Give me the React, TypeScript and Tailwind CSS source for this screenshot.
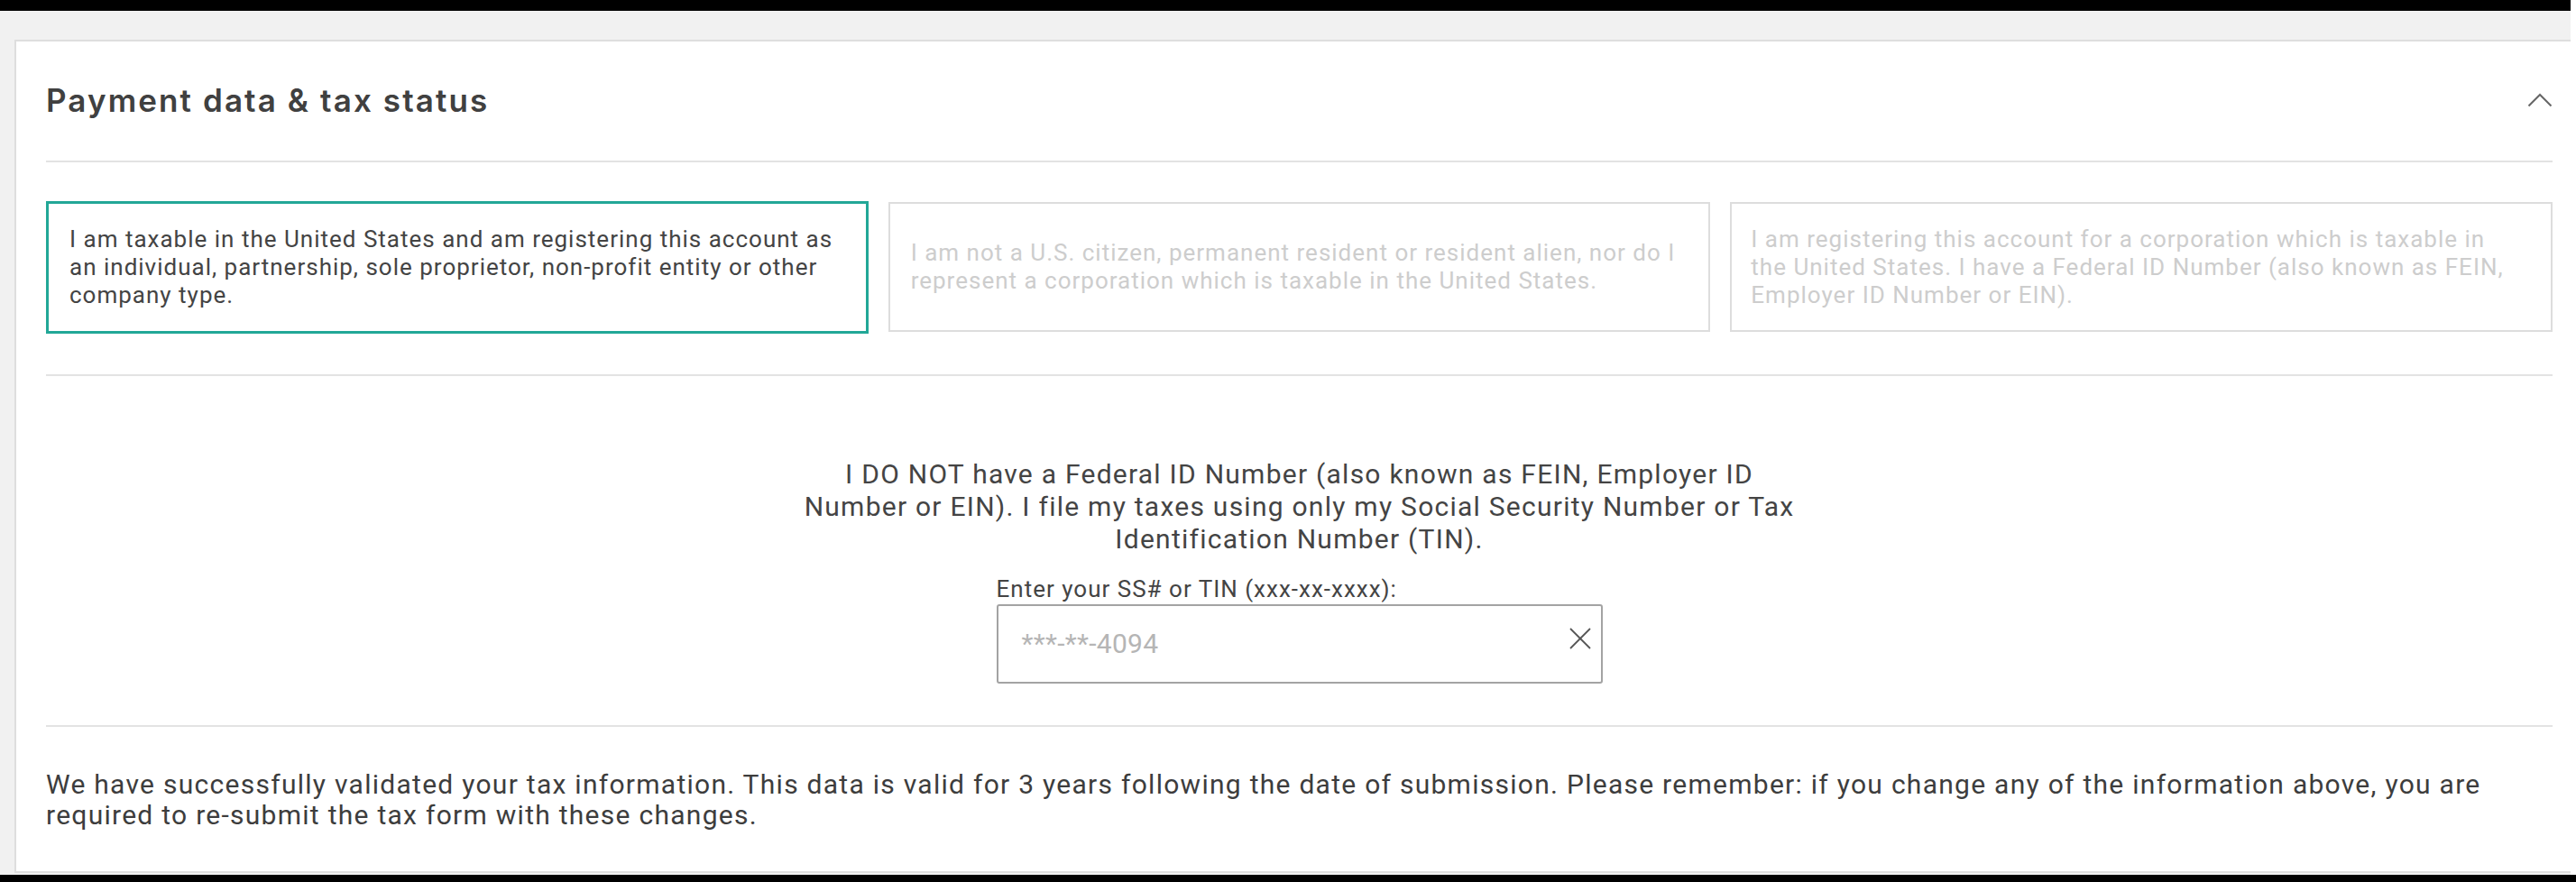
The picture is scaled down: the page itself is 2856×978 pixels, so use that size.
import React from "react";

const roboto = { fontFamily: "Roboto, 'Liberation Sans', sans-serif" };

function ChevronUp() {
  return (
    <svg width="28" height="16" viewBox="0 0 28 16" fill="none">
      <polyline points="1.5,14.5 14,2 26.5,14.5" stroke="#666" strokeWidth="2" />
    </svg>
  );
}

function CloseX() {
  return (
    <svg width="24" height="24" viewBox="0 0 24 24" fill="none">
      <line x1="1" y1="1" x2="23" y2="23" stroke="#555" strokeWidth="1.8" />
      <line x1="23" y1="1" x2="1" y2="23" stroke="#555" strokeWidth="1.8" />
    </svg>
  );
}

export default function App() {
  return (
    <div className="w-[2856px] h-[978px] bg-white flex flex-col" style={roboto}>
      <div className="h-[12px] w-[2850px] bg-black shrink-0" />
      <div className="w-[2850px] bg-[#f1f1f1] pt-[32px] pl-[16px] h-[958px] shrink-0">
        <div className="h-[924px] bg-white border-2 border-r-0 border-[#dedede] pl-[33px] pr-[20px] flex flex-col">
          {/* Header */}
          <div className="flex items-center justify-between pt-[45px] pb-[47px] border-b-2 border-[#e3e3e3]">
            <h2
              className="text-[35px] leading-[40px] font-semibold text-[#404040] tracking-[2.1px]"
              style={{ fontFamily: "Inter, 'Open Sans', sans-serif" }}
            >
              Payment data &amp; tax status
            </h2>
            <ChevronUp />
          </div>

          {/* Options */}
          <div className="pt-[43px] pb-[45px] border-b-2 border-[#e3e3e3]">
            <div className="grid grid-cols-3 gap-[22px] items-start">
              <div className="h-[147px] border-[3px] border-[#22a797] px-[23px] flex items-center text-[26px] leading-[31px] tracking-[1px] text-[#444] whitespace-nowrap">
                <p>
                  I am taxable in the United States and am registering this account as
                  <br />
                  an individual, partnership, sole proprietor, non-profit entity or other
                  <br />
                  company type.
                </p>
              </div>
              <div className="h-[144px] mt-[1px] border-2 border-[#dddddd] px-[23px] flex items-center text-[26px] leading-[31px] tracking-[1px] text-[#cdcdcd] whitespace-nowrap">
                <p>
                  I am not a U.S. citizen, permanent resident or resident alien, nor do I
                  <br />
                  represent a corporation which is taxable in the United States.
                </p>
              </div>
              <div className="h-[144px] mt-[1px] border-2 border-[#dddddd] px-[21px] flex items-center text-[26px] leading-[31px] tracking-[1px] text-[#cdcdcd] whitespace-nowrap">
                <p>
                  I am registering this account for a corporation which is taxable in
                  <br />
                  the United States. I have a Federal ID Number (also known as FEIN,
                  <br />
                  Employer ID Number or EIN).
                </p>
              </div>
            </div>
          </div>

          {/* Middle */}
          <div className="pt-[91px] pb-[46px] border-b-2 border-[#e3e3e3] flex flex-col items-center">
            <p className="text-[30px] leading-[36px] tracking-[1.25px] text-[#444] text-center whitespace-nowrap">
              I DO NOT have a Federal ID Number (also known as FEIN, Employer ID
              <br />
              Number or EIN). I file my taxes using only my Social Security Number or Tax
              <br />
              Identification Number (TIN).
            </p>
            <div className="w-[672px] mt-[22px] flex flex-col">
              <label className="text-[26px] leading-[30px] tracking-[1px] text-[#444] whitespace-nowrap">
                Enter your SS# or TIN (xxx-xx-xxxx):
              </label>
              <div className="mt-[2px] h-[88px] border-2 border-[#a3a3a3] rounded-[3px] pl-[26px] pr-[11px] flex items-center justify-between">
                <span className="text-[30px] leading-[36px] tracking-[0.3px] text-[#b5b5b5]">***-**-4094</span>
                <span className="mb-[13px]">
                  <CloseX />
                </span>
              </div>
            </div>
          </div>

          {/* Bottom */}
          <div className="pt-[47px]">
            <p className="text-[30px] leading-[34px] tracking-[1.27px] text-[#3d3d3d] whitespace-nowrap">
              We have successfully validated your tax information. This data is valid for 3 years following the date of submission. Please remember: if you change any of the information above, you are
              <br />
              required to re-submit the tax form with these changes.
            </p>
          </div>
        </div>
      </div>
      <div className="h-[8px] bg-black shrink-0" />
    </div>
  );
}
